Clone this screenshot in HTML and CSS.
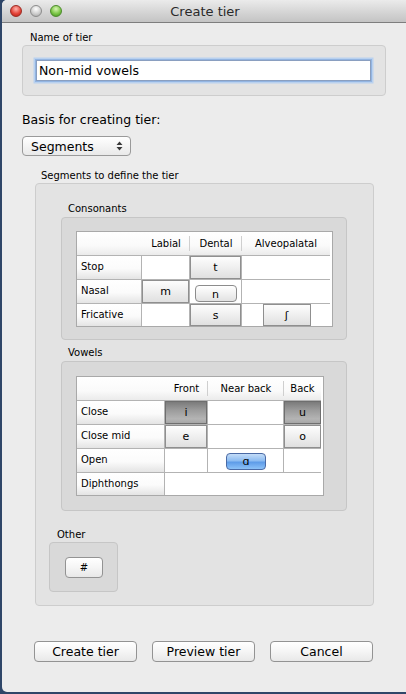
FILE: index.html
```html
<!DOCTYPE html>
<html>
<head>
<meta charset="utf-8">
<link rel="stylesheet" href="styles.css">
</head>
<body>
<div class="window">
  <div class="titlebar">
    <div class="lights">
      <span class="light red"></span>
      <span class="light gray"></span>
      <span class="light green"></span>
    </div>
    <div class="title">Create tier</div>
  </div>
  <div class="content">
    <div class="label name-label">Name of tier</div>
    <div class="group name-group">
      <div class="input">Non-mid vowels</div>
    </div>

    <div class="basis">Basis for creating tier:</div>
    <div class="select">
      <span>Segments</span>
      <svg class="updown" width="7" height="10" viewBox="0 0 7 10"><path d="M3.5 0.5 L6.5 4 H0.5 Z M3.5 9.5 L6.5 6 H0.5 Z" fill="#3a3a3a"/></svg>
    </div>

    <div class="label seg-label">Segments to define the tier</div>
    <div class="group seg-group">
      <div class="label sub-label">Consonants</div>
      <div class="group inner cons-group">
        <div class="tbl cons">
          <div class="hd corner"></div>
          <div class="hd sep">Labial</div>
          <div class="hd sep">Dental</div>
          <div class="hd">Alveopalatal</div>

          <div class="rh">Stop</div>
          <div class="c"></div>
          <div class="c"><span class="sq">t</span></div>
          <div class="c last"></div>

          <div class="rh">Nasal</div>
          <div class="c"><span class="sq">m</span></div>
          <div class="c center"><span class="rnd">n</span></div>
          <div class="c last"></div>

          <div class="rh lastrow">Fricative</div>
          <div class="c lastrow"></div>
          <div class="c lastrow"><span class="sq">s</span></div>
          <div class="c last lastrow mid"><span class="sq narrow">ʃ</span></div>
        </div>
      </div>

      <div class="label sub-label vow-label">Vowels</div>
      <div class="group inner vow-group">
        <div class="tbl vow">
          <div class="hd corner"></div>
          <div class="hd sep">Front</div>
          <div class="hd sep">Near back</div>
          <div class="hd">Back</div>

          <div class="rh">Close</div>
          <div class="c"><span class="sq pressed">i</span></div>
          <div class="c"></div>
          <div class="c last"><span class="sq pressed">u</span></div>

          <div class="rh">Close mid</div>
          <div class="c"><span class="sq">e</span></div>
          <div class="c"></div>
          <div class="c last"><span class="sq">o</span></div>

          <div class="rh">Open</div>
          <div class="c"></div>
          <div class="c center"><span class="rnd blue">ɑ</span></div>
          <div class="c last"></div>

          <div class="rh lastrow">Diphthongs</div>
          <div class="c span3 lastrow"></div>
        </div>
      </div>

      <div class="label other-label">Other</div>
      <div class="group inner other-group">
        <span class="btn hash">#</span>
      </div>
    </div>

    <div class="actions">
      <span class="btn action">Create tier</span>
      <span class="btn action">Preview tier</span>
      <span class="btn action">Cancel</span>
    </div>
  </div>
</div>
</body>
</html>
```

FILE: styles.css
```css
html, body {
  margin: 0;
  padding: 0;
  background: #2f4668;
  width: 406px;
  height: 694px;
  overflow: hidden;
}

body {
  font-family: "DejaVu Sans", "Liberation Sans", sans-serif;
  color: #000;
}

.window {
  margin-left: 2px;
  width: 404px;
  height: 692px;
  background: #ececec;
  border-radius: 5px 0 0 5px;
  overflow: hidden;
  display: flex;
  flex-direction: column;
}

.titlebar {
  height: 22px;
  flex: none;
  background: linear-gradient(#ebebeb, #d3d3d3 60%, #c4c4c4);
  border-bottom: 1px solid #7e7e7e;
  display: grid;
  align-items: center;
}

.lights, .title {
  grid-area: 1 / 1;
}

.lights {
  display: flex;
  gap: 8px;
  padding-left: 8px;
}

.light {
  width: 12px;
  height: 12px;
  border-radius: 50%;
  box-sizing: border-box;
}

.light.red {
  background: radial-gradient(circle at 50% 30%, #ffb4ad, #e4463b 55%, #b61d12);
  border: 1px solid #9c2a22;
}

.light.gray {
  background: radial-gradient(circle at 50% 30%, #ffffff, #cfcfcf 55%, #a2a2a2);
  border: 1px solid #8c8c8c;
}

.light.green {
  background: radial-gradient(circle at 50% 30%, #d9f5b4, #7cc748 55%, #3f8c1d);
  border: 1px solid #4b8a2a;
}

.title {
  justify-self: center;
  font-size: 13px;
  color: #2a2a2a;
  padding-left: 2px;
}

.content {
  padding: 0 19px 0 20px;
  display: flex;
  flex-direction: column;
  align-items: flex-start;
}

.label {
  font-size: 10px;
  line-height: 12px;
}

.name-label {
  margin: 9px 0 0 8px;
}

.group {
  box-sizing: border-box;
  background: #e3e3e3;
  border: 1px solid #cdcdcd;
  border-radius: 4px;
}

.name-group {
  margin-top: 1px;
  width: 364px;
  height: 51px;
  padding: 14px 0 0 13px;
}

.input {
  box-sizing: border-box;
  width: 335px;
  height: 21px;
  background: #fff;
  border: 1px solid #8a9fc0;
  box-shadow: 0 0 0 1px #93b5e2, 0 0 0 2.5px #b9d1ef;
  font-size: 12.5px;
  line-height: 19px;
  padding-left: 2px;
}

.basis {
  margin-top: 16px;
  font-size: 12.5px;
  line-height: 15px;
}

.select {
  margin-top: 9px;
  box-sizing: border-box;
  width: 109px;
  height: 20px;
  border: 1px solid #9a9a9a;
  border-radius: 4px;
  background: linear-gradient(#ffffff, #f4f4f4 50%, #e9e9e9);
  display: flex;
  align-items: center;
  justify-content: space-between;
  padding: 0 7px 0 8px;
  font-size: 12.5px;
}

.updown {
  display: block;
}

.seg-label {
  margin: 14px 0 0 19px;
}

.seg-group {
  margin: 1px 0 0 13px;
  width: 339px;
  height: 423px;
  flex: none;
  display: flex;
  flex-direction: column;
  align-items: flex-start;
}

.sub-label {
  margin: 19px 0 0 32px;
}

.vow-label {
  margin-top: 7px;
}

.group.inner {
  background: #d9d9d9;
  border-color: #c6c6c6;
}

.cons-group {
  margin: 2px 0 0 25px;
  width: 286px;
  height: 123px;
  flex: none;
  padding: 13px 0 0 14px;
}

.vow-group {
  margin: 2px 0 0 25px;
  width: 286px;
  height: 150px;
  flex: none;
  padding: 14px 0 0 14px;
}

.tbl {
  display: grid;
  background: #fff;
  border: 1px solid #a9a9a9;
  font-size: 10px;
}

.tbl.cons {
  width: 255px;
  grid-template-columns: 65px 48px 52px 88px;
  grid-template-rows: 24px 24px 24px 22px;
}

.tbl.vow {
  width: 246px;
  grid-template-columns: 88px 43px 76px 37px;
  grid-template-rows: 24px 24px 24px 24px 22px;
}

.tbl > div {
  box-sizing: border-box;
}

.hd {
  background: linear-gradient(#ffffff, #fafafa 60%, #ebebeb);
  border-bottom: 1px solid #b3b3b3;
  display: flex;
  align-items: center;
  justify-content: center;
  position: relative;
}

.hd.sep::after {
  content: "";
  position: absolute;
  right: 0;
  top: 4px;
  bottom: 4px;
  width: 1px;
  background: #cfcfcf;
}

.rh {
  background: linear-gradient(#ffffff, #fbfbfb 55%, #e4e4e4);
  border-right: 1px solid #b3b3b3;
  border-bottom: 1px solid #b3b3b3;
  display: flex;
  align-items: center;
  padding-left: 4px;
  padding-bottom: 2px;
}

.c {
  border-right: 1px solid #b3b3b3;
  border-bottom: 1px solid #b3b3b3;
  display: flex;
}

.c.last {
  border-right: none;
}

.lastrow {
  border-bottom: none !important;
}

.c.span3 {
  grid-column: span 3;
  border-right: none;
}

.c.center {
  justify-content: center;
  align-items: flex-start;
}

.c.mid {
  justify-content: center;
}

.sq {
  flex: 1;
  box-sizing: border-box;
  border: 1px solid #8f8f8f;
  background: linear-gradient(#fdfdfd, #efefef 50%, #e0e0e0);
  display: flex;
  align-items: center;
  justify-content: center;
  font-size: 11px;
}

.sq.narrow {
  flex: none;
  width: 48px;
  margin-left: 1px;
}

.sq.pressed {
  background: linear-gradient(#7b7b7b, #9c9c9c 40%, #b4b4b4 80%, #a6a6a6);
  border-color: #6e6e6e;
}

.rnd {
  box-sizing: border-box;
  width: 42px;
  height: 17px;
  margin-top: 5px;
  border: 1px solid #8c8c8c;
  border-radius: 4px;
  background: linear-gradient(#ffffff, #f1f1f1 50%, #e2e2e2);
  display: flex;
  align-items: center;
  justify-content: center;
  font-size: 11px;
  padding-top: 2px;
}

.rnd.blue {
  width: 40px;
  margin-top: 4px;
  margin-left: 1px;
  border-color: #4a6aa5;
  background: linear-gradient(#c3dcf8, #8dbcf1 45%, #5e9ce8 55%, #8cc2f8);
  padding-top: 0;
}

.other-label {
  margin: 18px 0 0 21px;
}

.other-group {
  margin: 1px 0 0 13px;
  width: 69px;
  height: 50px;
  flex: none;
  padding: 14px 0 0 15px;
}

.btn {
  box-sizing: border-box;
  border: 1px solid #939393;
  border-radius: 4px;
  background: linear-gradient(#ffffff, #f5f5f5 50%, #e8e8e8);
  display: flex;
  align-items: center;
  justify-content: center;
}

.hash {
  width: 38px;
  height: 21px;
  font-size: 10px;
}

.actions {
  margin: 35px 0 0 12px;
  display: flex;
  gap: 15px;
}

.btn.action {
  width: 103px;
  height: 21px;
  font-size: 12.5px;
}
```
